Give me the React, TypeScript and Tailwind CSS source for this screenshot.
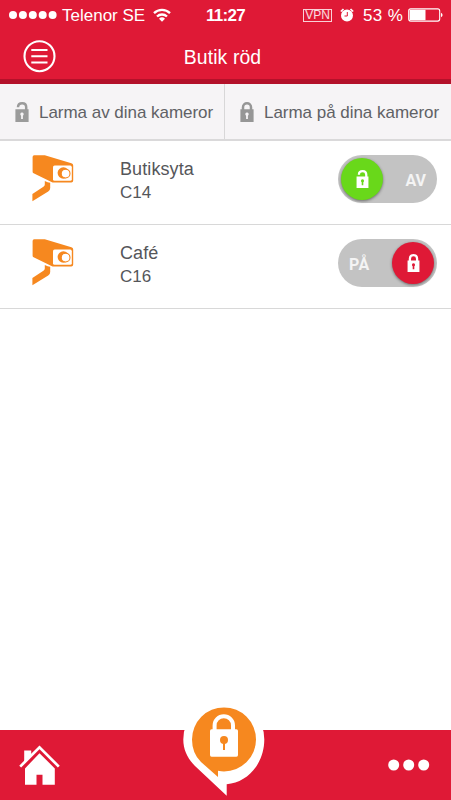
import clsx from "clsx";

type Camera = {
  id: string;
  name: string;
  armed: boolean;
};

const cameras: Camera[] = [
  { id: "C14", name: "Butiksyta", armed: false },
  { id: "C16", name: "Café", armed: true },
];

function LockIcon({ open = false, className }: { open?: boolean; className?: string }) {
  return (
    <svg viewBox="0 0 14 20" className={className} fill="none">
      <path
        d={open ? "M3 5.2C3 2.8 4.8 1.3 7.2 1.3s4 1.5 4 4V9" : "M3 9V5.3C3 2.8 4.8 1.3 7 1.3s4 1.5 4 4V9"}
        stroke="currentColor"
        strokeWidth="2.5"
      />
      <path
        fillRule="evenodd"
        fill="currentColor"
        d="M.4 7.2h13.2V20H.4zM7 10.4a1.8 1.8 0 0 0-.9 3.3V17h1.8v-3.3a1.8 1.8 0 0 0-.9-3.3z"
      />
    </svg>
  );
}

function CameraIcon() {
  return (
    <svg viewBox="0 0 42 47" className="h-[47px] w-[42px]">
      <path
        fill="#f6881f"
        d="M2.2.2h10.6L39.4 8.2q1.8.5 1.8 2.3v15q0 1.9-1.9 1.9H21.8q-1.2 0-2.3-.5L1.6 18.3Q.6 17.8.6 16.7V2Q.6.2 2.2.2z"
      />
      <rect x="21" y="10.6" width="18.8" height="15.2" rx="1.6" fill="#fff" />
      <circle cx="31.4" cy="18" r="5.8" fill="#f6881f" />
      <circle cx="33.6" cy="18.6" r="4.4" fill="#fff" stroke="#f6881f" strokeWidth="1.1" />
      <path fill="#f6881f" d="M12.8 26.1q3 1.6 5.4 1.6v5.2q0 2.3-2 3.6L.4 46.2V39l11-7.2q1.4-.9 1.4-2.3z" />
    </svg>
  );
}

function StatusBar() {
  return (
    <div className="grid h-[29px] grid-cols-[206px_97px_1fr] items-center text-[17px] leading-[29px]">
      <div className="flex h-[29px] items-center pl-[9px]">
        <svg viewBox="0 0 48 8" className="h-2 w-12" fill="currentColor">
          <circle cx="4" cy="4" r="4" />
          <circle cx="13.9" cy="4" r="4" />
          <circle cx="23.8" cy="4" r="4" />
          <circle cx="33.7" cy="4" r="4" />
          <circle cx="43.6" cy="4" r="4" />
        </svg>
        <span className="ml-[5px] pt-px whitespace-nowrap">Telenor SE</span>
        <svg viewBox="0 0 18 14" className="ml-2 h-[14px] w-[18px]" fill="none" stroke="currentColor" strokeWidth="2.3">
          <path d="M1 5.2a11.5 11.5 0 0 1 16 0M4 8.5a7.2 7.2 0 0 1 10 0" />
          <path d="M9 13.8 6 10.8a4.3 4.3 0 0 1 6 0z" fill="currentColor" stroke="none" />
        </svg>
      </div>
      <span className="pt-px text-[17px] font-bold tracking-[-0.7px]">11:27</span>
      <div className="flex h-[29px] items-center">
        <span className="flex h-[13px] w-[29px] items-center justify-center border border-white/80 text-[12px] leading-none text-white/85">
          VPN
        </span>
        <svg viewBox="0 0 14 14" className="ml-2 h-[14px] w-[14px]">
          <circle cx="7" cy="7.6" r="6" fill="#fff" />
          <path d="M.8 3.5 3.5 1M13.2 3.5 10.5 1" stroke="#fff" strokeWidth="1.7" />
          <path d="M7.3 4v4H4.5" stroke="#df1936" fill="none" />
        </svg>
        <span className="ml-[9px] pt-px whitespace-nowrap tracking-[0.4px]">53 %</span>
        <svg viewBox="0 0 35 14" className="ml-[5px] h-[14px] w-[35px] shrink-0" fill="none">
          <rect x=".7" y=".9" width="31" height="12.2" rx="2" stroke="#fff" strokeWidth="1.1" />
          <path d="M1.6 1.8h15.9v10.4H1.6z" fill="#fff" />
          <path d="M33 4.8q1.6.7 1.6 2.2T33 9.2z" fill="#fff" />
        </svg>
      </div>
    </div>
  );
}

function Toggle({ armed }: { armed: boolean }) {
  return (
    <button
      className={clsx(
        "flex h-12 w-[99px] items-center justify-between rounded-full bg-[#c3c3c3] px-[3px] text-[#f4f4f4]",
        armed && "flex-row-reverse",
      )}
    >
      <span
        className={clsx(
          "flex size-[42px] items-center justify-center rounded-full text-white shadow-[0_1px_3px_rgba(0,0,0,0.45)]",
          armed ? "bg-[#df1936]" : "bg-[#69d81a]",
        )}
      >
        <LockIcon open={!armed} className="h-[18px] w-[13px]" />
      </span>
      <span
        className={clsx(
          "pt-[3px] font-['Roboto',sans-serif] text-[16px] leading-5 font-bold",
          armed ? "pl-[8px] tracking-[0.5px]" : "pr-[8px]",
        )}
      >
        {armed ? "PÅ" : "AV"}
      </span>
    </button>
  );
}

function CameraRow({ camera }: { camera: Camera }) {
  return (
    <li className="flex h-[84px] items-start border-b border-[#d8d8d8] pr-[14px] pl-8">
      <div className="w-[88px] pt-[14px]">
        <CameraIcon />
      </div>
      <div className="flex-1 pt-4 leading-6 text-[#55565a]">
        <p className="text-[18px] tracking-[0.1px]">{camera.name}</p>
        <p className="text-[17px]">{camera.id}</p>
      </div>
      <div className="pt-[14px]">
        <Toggle armed={camera.armed} />
      </div>
    </li>
  );
}

export default function App() {
  return (
    <div className="flex h-[800px] w-[451px] flex-col overflow-hidden bg-white font-['Liberation_Sans',Arial,sans-serif]">
      <header className="h-[84px] border-b-[5px] border-[#b4112a] bg-[#df1936] text-white">
        <StatusBar />
        <div className="grid grid-cols-[1fr_auto_1fr] items-center px-[23px]">
          <svg viewBox="0 0 34 34" className="mt-[10px] h-[34px] w-[34px]" fill="none" stroke="#fff">
            <circle cx="16.5" cy="17.2" r="15" strokeWidth="2.1" />
            <path d="M8.3 11h16.2M8.3 17.2h16.2M8.3 23.4h16.2" strokeWidth="2" />
          </svg>
          <h1 className="mt-[11px] mr-[6px] text-[19.4px] leading-[26px] tracking-[0.1px]">Butik röd</h1>
        </div>
      </header>

      <div className="grid h-[57px] grid-cols-[225px_226px] border-b-2 border-[#dad9da] bg-[#f6f4f6] text-[17px] whitespace-nowrap text-[#606165]">
        <button className="flex items-center border-r border-[#d8d7d8] pt-[2px] pl-[15px]">
          <LockIcon open className="mb-px h-5 w-[14px] text-[#9b9b9b]" />
          <span className="ml-[10px] tracking-[-0.03px]">Larma av dina kameror</span>
        </button>
        <button className="flex items-center pt-[2px] pl-[15px]">
          <LockIcon className="mb-px h-5 w-[14px] text-[#969696]" />
          <span className="ml-[10px] tracking-[-0.03px]">Larma på dina kameror</span>
        </button>
      </div>

      <ul className="flex-1">
        {cameras.map((camera) => (
          <CameraRow key={camera.id} camera={camera} />
        ))}
      </ul>

      <footer className="grid h-[70px] grid-cols-[183px_82px_1fr] bg-[#df1936]">
        <svg viewBox="0 0 42 42" className="mt-[14px] ml-[19px] h-[42px] w-[42px]">
          <path d="M5.2 6.5h7v6l-7 7z" fill="#fff" />
          <path d="M1.2 24.8 20.5 5.6l19.3 19.2" fill="none" stroke="#df1936" strokeWidth="4" />
          <path d="M20.5 9.2 35.8 24.4v16.4H23.5v-10h-6v10H6V24.4z" fill="#fff" />
          <path d="M1.2 22.6 20.5 3.3l19.3 19.3" fill="none" stroke="#fff" strokeWidth="2.7" />
        </svg>
        <svg viewBox="0 0 82 100" className="-mt-[30px] h-[100px] w-[82px]">
          <path
            fill="#fff"
            d="M40.8-1A40.5 40.5 0 0 1 81.3 39.5C81.3 63 65 82.7 43.7 84.2V95.7L12 66C4.5 58.5 .3 49.5 .3 39.5A40.5 40.5 0 0 1 40.8-1z"
          />
          <path
            fill="#f6881f"
            d="M41 7.4a32 32 0 1 1 0 64q-2.6 0-6-.6v6.3L18 62Q9 53 9 39.4a32 32 0 0 1 32-32z"
          />
          <path d="M31.6 31V25.4a9.2 9.2 0 0 1 18.4 0V31" fill="none" stroke="#fff" strokeWidth="4" />
          <rect x="27" y="29.3" width="28" height="27.4" rx="1.6" fill="#fff" />
          <circle cx="41" cy="40" r="4" fill="#f6881f" />
          <path d="M41 40v10" stroke="#f6881f" strokeWidth="2" />
        </svg>
        <svg viewBox="0 0 42 12" className="mt-[29px] ml-[123px] h-3 w-[42px]" fill="#fff">
          <circle cx="5.7" cy="6" r="5.5" />
          <circle cx="20.7" cy="6" r="5.5" />
          <circle cx="35.7" cy="6" r="5.5" />
        </svg>
      </footer>
    </div>
  );
}
